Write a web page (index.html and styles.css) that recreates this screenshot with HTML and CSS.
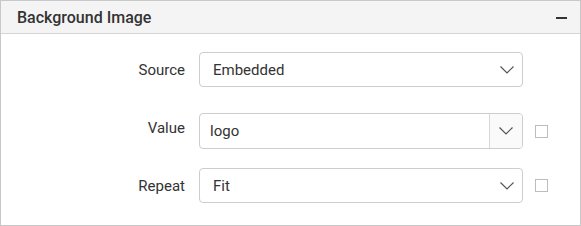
FILE: index.html
```html
<!DOCTYPE html>
<html>
<head>
<meta charset="utf-8">
<link rel="stylesheet" href="styles.css">
</head>
<body>
<div class="panel">
  <div class="panel-header">
    <span class="panel-title">Background Image</span>
    <span class="collapse"></span>
  </div>
  <div class="panel-body">
    <div class="row row-source">
      <label class="label">Source</label>
      <div class="dropdown">
        <span class="dd-text">Embedded</span>
        <svg class="chev" width="14" height="8" viewBox="0 0 14 8"><path d="M0.5 0.5 L7 7 L13.5 0.5" fill="none" stroke="#555" stroke-width="1.2"/></svg>
      </div>
    </div>
    <div class="row row-value">
      <label class="label label-value">Value</label>
      <div class="combo">
        <span class="combo-text">logo</span>
        <span class="combo-btn">
          <svg class="chev" width="14" height="8" viewBox="0 0 14 8"><path d="M0.5 0.5 L7 7 L13.5 0.5" fill="none" stroke="#555" stroke-width="1.2"/></svg>
        </span>
      </div>
      <span class="check"></span>
    </div>
    <div class="row row-repeat">
      <label class="label">Repeat</label>
      <div class="dropdown">
        <span class="dd-text">Fit</span>
        <svg class="chev" width="14" height="8" viewBox="0 0 14 8"><path d="M0.5 0.5 L7 7 L13.5 0.5" fill="none" stroke="#555" stroke-width="1.2"/></svg>
      </div>
      <span class="check"></span>
    </div>
  </div>
</div>
</body>
</html>
```
FILE: styles.css
```css
* { box-sizing: border-box; }
html, body { margin: 0; padding: 0; background: #fff; }
body { font-family: Roboto, "Liberation Sans", sans-serif; color: #333; }
.panel {
  width: 581px;
  height: 226px;
  border: 1px solid #c8c8c8;
}
.panel-header {
  height: 33px;
  background: #f4f4f4;
  border-bottom: 1px solid #d4d4d4;
  display: flex;
  align-items: center;
  justify-content: space-between;
  padding: 0 13px 0 16px;
}
.panel-title {
  font-size: 16px;
  font-weight: 500;
  color: #333;
}
.collapse {
  width: 11px;
  height: 2px;
  background: #333;
  margin-top: 1px;
}
.panel-body {
  padding-top: 18px;
}
.row {
  display: flex;
  align-items: center;
}
.row-value { margin-top: 26px; }
.row-repeat { margin-top: 19px; }
.label {
  width: 184px;
  text-align: right;
  margin-right: 14px;
  font-size: 15px;
  color: #333;
}
.label-value { position: relative; top: -3px; }
.dropdown, .combo {
  width: 324px;
  height: 35px;
  border: 1px solid #cdcdcd;
  border-radius: 4px;
  display: flex;
  align-items: center;
  font-size: 15px;
  color: #333;
}
.dropdown {
  justify-content: space-between;
  padding: 0 8px 0 13px;
}
.combo { height: 36px; }
.combo-text {
  flex: 1;
  padding-left: 10px;
}
.combo-btn {
  width: 33px;
  height: 100%;
  border-left: 1px solid #d8d8d8;
  background: #fafafa;
  display: flex;
  align-items: center;
  justify-content: center;
  border-radius: 0 3px 3px 0;
}
.chev { display: block; }
.check {
  width: 13px;
  height: 13px;
  border: 1px solid #bdbdbd;
  margin-left: 12px;
}
```
